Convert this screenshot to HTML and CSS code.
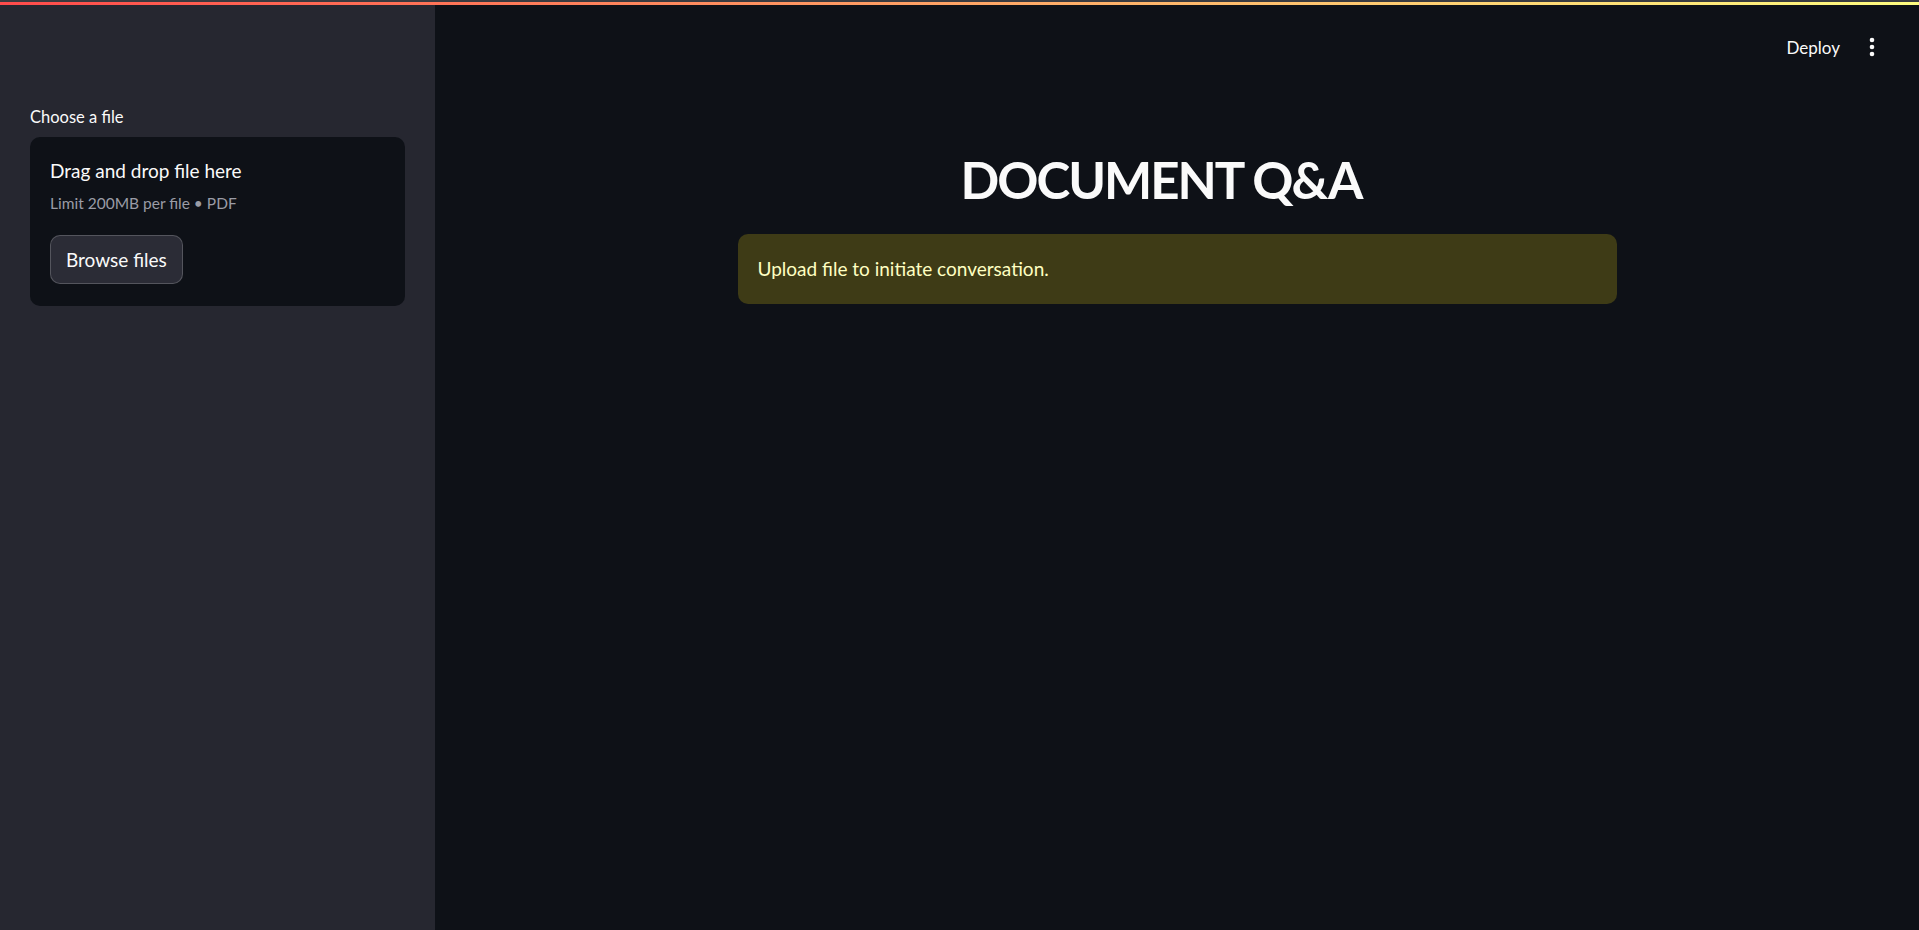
FILE: index.html
```html
<!DOCTYPE html>
<html lang="en">
<head>
    <meta charset="UTF-8">
    <meta name="viewport" content="width=device-width, initial-scale=1.0">
    <title>Document Q&amp;A</title>
    <link rel="stylesheet" href="styles.css">
</head>
<body>
    <div class="edge"></div>
    <div class="decoration"></div>
    <div class="app">
        <aside class="sidebar">
            <label class="upload-label" for="file">Choose a file</label>
            <section class="dropzone">
                <div class="drop-title">Drag and drop file here</div>
                <div class="drop-hint">Limit 200MB per file • PDF</div>
                <button class="browse-btn" type="button">Browse files</button>
                <input type="file" id="file" accept=".pdf" hidden>
            </section>
        </aside>
        <main class="main">
            <header class="toolbar">
                <span class="deploy">Deploy</span>
                <button class="menu-btn" type="button" aria-label="Main menu">
                    <svg width="6" height="20" viewBox="0 0 6 20">
                        <circle cx="3" cy="3" r="2.3" fill="#fafafa"/>
                        <circle cx="3" cy="10" r="2.3" fill="#fafafa"/>
                        <circle cx="3" cy="17" r="2.3" fill="#fafafa"/>
                    </svg>
                </button>
            </header>
            <div class="block-container">
                <h1 class="title">DOCUMENT Q&amp;A</h1>
                <div class="alert-warning">Upload file to initiate conversation.</div>
            </div>
        </main>
    </div>
</body>
</html>
```

FILE: styles.css
```css
html, body {
    height: 100%;
}

body {
    margin: 0;
    background-color: #0e1117;
    color: #fafafa;
    font-family: 'Lato', 'Noto Sans', sans-serif;
    display: flex;
    flex-direction: column;
    overflow: hidden;
}

.edge {
    height: 2px;
    background-color: #3a3b40;
}

.decoration {
    height: 3px;
    background-image: linear-gradient(90deg, #ff4b4b, #fffd80);
}

.app {
    flex: 1;
    display: flex;
    min-height: 0;
}

.sidebar {
    width: 435px;
    flex-shrink: 0;
    background-color: #262730;
    padding: 99px 30px 0;
    box-sizing: border-box;
}

.upload-label {
    display: block;
    font-size: 16.5px;
    line-height: 26px;
    margin-bottom: 7px;
    color: #fafafa;
}

.dropzone {
    background-color: #0e1117;
    border-radius: 10px;
    padding: 20px 20px 22px;
}

.drop-title {
    font-size: 19px;
    line-height: 28px;
}

.drop-hint {
    font-size: 15.5px;
    line-height: 26px;
    color: #9a9ca6;
    margin-top: 5px;
}

.browse-btn {
    margin-top: 19px;
    height: 49px;
    padding: 0 15px;
    font-family: inherit;
    font-size: 19px;
    color: #fafafa;
    background-color: #2b2c36;
    border: 1px solid rgba(250, 250, 250, 0.2);
    border-radius: 10px;
    cursor: pointer;
}

.main {
    flex: 1;
    display: flex;
    flex-direction: column;
}

.toolbar {
    height: 84px;
    display: flex;
    justify-content: flex-end;
    align-items: center;
    padding-right: 44px;
    gap: 29px;
}

.deploy {
    font-size: 17px;
    color: #fafafa;
}

.menu-btn {
    background: none;
    border: none;
    padding: 0;
    display: flex;
}

.block-container {
    width: 879px;
    margin: 0 auto;
}

.title {
    margin: 60px 0 0;
    font-size: 51px;
    font-weight: 700;
    letter-spacing: -2px;
    line-height: 1.2;
    text-align: center;
    padding-right: 32px;
}

.alert-warning {
    margin-top: 24px;
    background-color: #3e3b16;
    color: #ffffc2;
    border-radius: 10px;
    padding: 19px 20px;
    font-size: 19px;
    line-height: 32px;
}
```
